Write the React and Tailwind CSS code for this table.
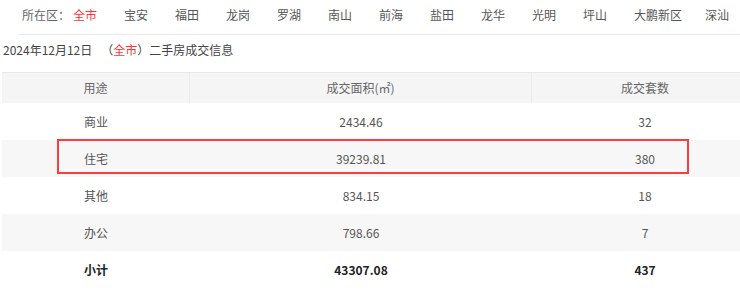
import React from "react";

const districts = [
  { name: "全市", active: true },
  { name: "宝安" },
  { name: "福田" },
  { name: "龙岗" },
  { name: "罗湖" },
  { name: "南山" },
  { name: "前海" },
  { name: "盐田" },
  { name: "龙华" },
  { name: "光明" },
  { name: "坪山" },
  { name: "大鹏新区", wide: true },
  { name: "深汕" },
];

const rows = [
  { use: "商业", area: "2434.46", count: "32" },
  { use: "住宅", area: "39239.81", count: "380", striped: true },
  { use: "其他", area: "834.15", count: "18" },
  { use: "办公", area: "798.66", count: "7", striped: true },
];

export default function App() {
  return (
    <div
      className="relative w-[740px] h-[304px] overflow-hidden bg-white text-[#444] text-[12px]"
      style={{ fontFamily: '"Noto Sans CJK SC", "Noto Sans", sans-serif' }}
    >
      {/* District filter */}
      <div className="ml-[19px] h-[35px] border-b border-[#e8e8e8] flex items-center pb-[4px] pl-[3px]">
        <span className="w-[51px] shrink-0 text-[#666]">所在区：</span>
        {districts.map((d) => (
          <span
            key={d.name}
            className={`shrink-0 ${d.wide ? "w-[71px]" : "w-[51px]"} ${
              d.active ? "text-[#ff3333]" : "text-[#555]"
            }`}
          >
            {d.name}
          </span>
        ))}
      </div>

      {/* Title line */}
      <div className="mt-[5px] h-[20px] leading-[20px] pl-[3px] text-[#444] whitespace-nowrap">
        2024年12月12日
        <span className="ml-[9px]">（</span>
        <span className="text-[#ff3333]">全市</span>
        <span>）二手房成交信息</span>
      </div>

      {/* Table */}
      <div className="mt-[12px] ml-[2px] w-[756px] text-[#555]">
        <div className="flex h-[31px] bg-[#f5f5f5] border-t border-[#e8e8e8] text-[#666]">
          <div className="w-[188px] flex items-center justify-center border-r border-[#ebebeb]">
            用途
          </div>
          <div className="w-[342px] flex items-center justify-center border-r border-[#ebebeb]">
            成交面积(㎡)
          </div>
          <div className="w-[226px] flex items-center justify-center">
            成交套数
          </div>
        </div>

        {rows.map((r) => (
          <div
            key={r.use}
            className={`flex h-[37px] ${r.striped ? "bg-[#f7f7f7]" : "bg-white"}`}
          >
            <div className="w-[188px] flex items-center justify-center">{r.use}</div>
            <div className="w-[342px] flex items-center justify-center">{r.area}</div>
            <div className="w-[226px] flex items-center justify-center">{r.count}</div>
          </div>
        ))}

        <div className="flex h-[37px] font-bold text-[#222]">
          <div className="w-[188px] flex items-center justify-center">小计</div>
          <div className="w-[342px] flex items-center justify-center">43307.08</div>
          <div className="w-[226px] flex items-center justify-center">437</div>
        </div>
      </div>

      {/* Highlight on 住宅 row */}
      <div className="absolute left-[57px] top-[139px] w-[632px] h-[35px] border-2 border-[#ff3b3b]" />
    </div>
  );
}
